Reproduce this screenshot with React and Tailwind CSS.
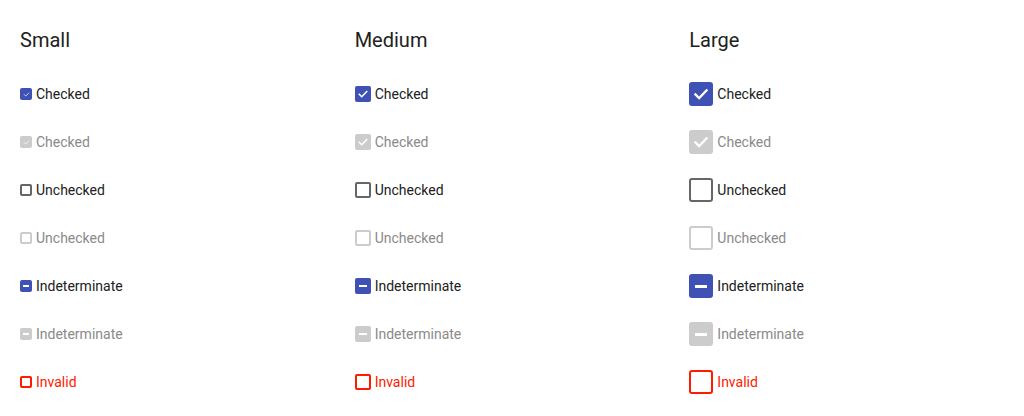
import React from 'react';

// Tamaños de checkbox con sus clases completas
const sizes = [
  {
    id: 'small',
    title: 'Small',
    box: 'w-3 h-3 rounded-[2px]',
    border: 'border-2',
    check: 'w-[7px] h-[7px]',
    stroke: 2.5,
    bar: 'w-[6px] h-[1.5px]',
  },
  {
    id: 'medium',
    title: 'Medium',
    box: 'w-4 h-4 rounded-[2px]',
    border: 'border-2',
    check: 'w-[12px] h-[12px]',
    stroke: 3,
    bar: 'w-[8px] h-[2px]',
  },
  {
    id: 'large',
    title: 'Large',
    box: 'w-6 h-6 rounded-[3px]',
    border: 'border-2',
    check: 'w-[18px] h-[18px]',
    stroke: 3,
    bar: 'w-[12px] h-[3px]',
  },
];

const states = [
  { label: 'Checked', kind: 'checked' },
  { label: 'Checked', kind: 'checked', disabled: true },
  { label: 'Unchecked', kind: 'unchecked' },
  { label: 'Unchecked', kind: 'unchecked', disabled: true },
  { label: 'Indeterminate', kind: 'indeterminate' },
  { label: 'Indeterminate', kind: 'indeterminate', disabled: true },
  { label: 'Invalid', kind: 'invalid' },
];

const Box = ({ size, kind, disabled }) => {
  if (kind === 'checked' || kind === 'indeterminate') {
    return (
      <span
        className={`${size.box} shrink-0 flex items-center justify-center ${
          disabled ? 'bg-[#cccccc]' : 'bg-[#3f51b5]'
        }`}
      >
        {kind === 'checked' ? (
          <svg viewBox="0 0 24 24" className={size.check} fill="none">
            <path
              d="M4.5 12.5l5 5L19.5 7"
              stroke="white"
              strokeWidth={size.stroke}
              strokeLinecap="square"
            />
          </svg>
        ) : (
          <span className={`${size.bar} bg-white`} />
        )}
      </span>
    );
  }

  const borderColor =
    kind === 'invalid'
      ? 'border-[#ff1a00]'
      : disabled
      ? 'border-[#cccccc]'
      : 'border-[#666666]';

  return <span className={`${size.box} ${size.border} ${borderColor} shrink-0 bg-white`} />;
};

const labelColor = (kind, disabled) => {
  if (kind === 'invalid') return 'text-[#ff1a00]';
  if (disabled) return 'text-[#8a8a8a]';
  return 'text-[#212121]';
};

export default function App() {
  return (
    <div
      className="w-[1024px] h-[416px] bg-white pl-5 pt-[26px] grid grid-cols-3"
      style={{ fontFamily: 'Roboto, "Liberation Sans", sans-serif' }}
    >
      {sizes.map((size) => (
        <div key={size.id} className="flex flex-col">
          <h2 className="text-[20px] leading-[28px] text-[#212121] mb-4">{size.title}</h2>
          {states.map((st, i) => (
            <div key={i} className="h-12 flex items-center gap-1">
              <Box size={size} kind={st.kind} disabled={st.disabled} />
              <span className={`text-sm leading-5 ${labelColor(st.kind, st.disabled)}`}>
                {st.label}
              </span>
            </div>
          ))}
        </div>
      ))}
    </div>
  );
}
